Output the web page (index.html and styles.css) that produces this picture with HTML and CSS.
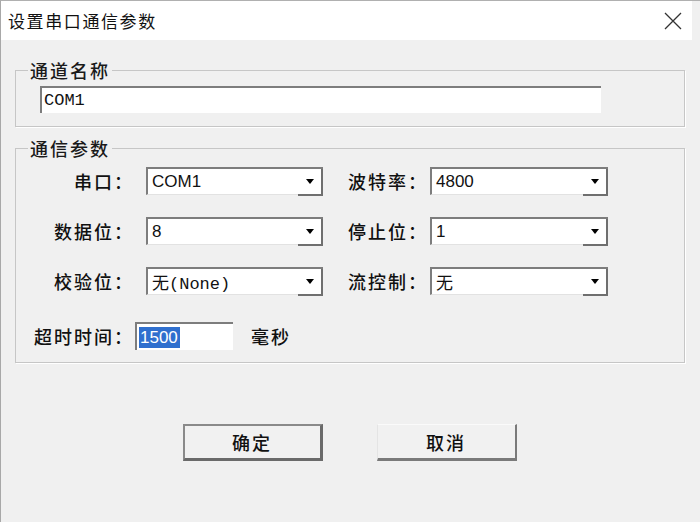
FILE: index.html
```html
<!DOCTYPE html>
<html lang="zh-CN">
<head>
    <meta charset="UTF-8">
    <title>设置串口通信参数</title>
    <link rel="stylesheet" href="styles.css">
</head>
<body>
<div class="window">
    <div class="titlebar">
        <span class="title">设置串口通信参数</span>
        <span class="close">
            <svg width="18" height="18" viewBox="0 0 18 18"><path d="M1 1L17 17M17 1L1 17" stroke="#333" stroke-width="1.3" fill="none"/></svg>
        </span>
    </div>

    <fieldset class="group">
        <legend>通道名称</legend>
        <div class="name-row">
            <div class="edit name-edit"><span class="mono">COM1</span></div>
        </div>
    </fieldset>

    <fieldset class="group">
        <legend>通信参数</legend>
        <div class="params">
            <label>串口：</label>
            <div class="combo"><span class="val mono">COM1</span><span class="arrow"></span></div>
            <label class="right">波特率：</label>
            <div class="combo wide"><span class="val">4800</span><span class="arrow"></span></div>

            <label>数据位：</label>
            <div class="combo"><span class="val">8</span><span class="arrow"></span></div>
            <label class="right">停止位：</label>
            <div class="combo wide"><span class="val mono">1</span><span class="arrow"></span></div>

            <label>校验位：</label>
            <div class="combo"><span class="val">无<span class="mono">(None)</span></span><span class="arrow"></span></div>
            <label class="right">流控制：</label>
            <div class="combo wide"><span class="val">无</span><span class="arrow"></span></div>
        </div>
        <div class="timeout">
            <label>超时时间：</label>
            <div class="edit time-edit"><span class="sel">1500</span></div>
            <span class="unit">毫秒</span>
        </div>
    </fieldset>

    <div class="buttons">
        <button class="btn default">确定</button>
        <button class="btn">取消</button>
    </div>
</div>
</body>
</html>
```

FILE: styles.css
```css
body {
    margin: 0;
    background: #f0f0f0;
    font-family: "Noto Sans CJK SC", "Liberation Sans", sans-serif;
    color: #111;
}
.window {
    height: 522px;
    border-left: 1px solid #a8a8a8;
    border-top: 1px solid #b0b0b0;
    box-sizing: border-box;
    overflow: hidden;
}
.titlebar {
    height: 39px;
    background: #fff;
    display: flex;
    align-items: center;
    justify-content: space-between;
    padding: 0 10px 0 7px;
    margin-right: 8px;
}
.title {
    font-size: 17px;
    letter-spacing: 1.6px;
    color: #111;
}
.close {
    display: flex;
}
.group {
    margin: 19px 15px 0 14px;
    padding: 0;
    border: 1px solid #c6c6c6;
    box-shadow: 1px 1px 0 #fff;
}
.group + .group {
    margin-top: 10px;
}
legend {
    margin-left: 12px;
    padding: 0 2px;
    font-size: 18px;
    font-weight: 500;
    line-height: 22px;
    letter-spacing: 2px;
    color: #1a1a1a;
}
.name-row {
    padding: 5px 0 13px 24px;
}
.edit {
    box-sizing: border-box;
    height: 27px;
    background: #fff;
    border-top: 2px solid #7d7d7d;
    border-left: 2px solid #7d7d7d;
    display: flex;
    align-items: center;
}
.name-edit {
    width: 561px;
    padding-left: 2px;
    font-size: 17px;
}
.mono {
    font-family: "Liberation Mono", monospace;
}
.params {
    display: grid;
    grid-template-columns: 130px 177px 107px 178px;
    row-gap: 22px;
    padding-top: 8px;
}
.params label {
    font-size: 18px;
    font-weight: 500;
    letter-spacing: 2px;
    text-align: right;
    padding-right: 12px;
    line-height: 28px;
}
.params label.right {
    padding-right: 2px;
}
.combo {
    box-sizing: border-box;
    height: 28px;
    background: #fff;
    border-top: 2px solid #7d7d7d;
    border-left: 2px solid #7d7d7d;
    border-bottom: 1px solid #e2e2e2;
    display: flex;
    align-items: center;
}
.val {
    flex: 1;
    padding-left: 4px;
    font-size: 17px;
    font-family: "Liberation Sans", "Noto Sans CJK SC", sans-serif;
}
.arrow {
    box-sizing: border-box;
    width: 25px;
    height: 27px;
    margin-bottom: -1px;
    border-right: 2px solid #6f6f6f;
    border-bottom: 2px solid #6f6f6f;
    display: flex;
    align-items: center;
    justify-content: center;
}
.arrow::after {
    content: "";
    border-left: 4px solid transparent;
    border-right: 4px solid transparent;
    border-top: 5px solid #000;
}
.timeout {
    display: flex;
    align-items: center;
    padding: 27px 0 12px 18px;
}
.timeout label {
    font-size: 18px;
    font-weight: 500;
    letter-spacing: 2px;
}
.time-edit {
    width: 98px;
    height: 28px;
    margin-left: 1px;
    padding-left: 2px;
}
.sel {
    background: #2f6fce;
    color: #fff;
    font-family: "Liberation Sans", sans-serif;
    font-size: 17px;
    line-height: 21px;
    padding: 0 2px 0 1px;
}
.unit {
    margin-left: 18px;
    font-size: 18px;
    font-weight: 500;
    letter-spacing: 2px;
}
.buttons {
    display: flex;
    justify-content: center;
    gap: 54px;
    margin-top: 61px;
    padding-right: 2px;
}
.btn {
    box-sizing: border-box;
    width: 140px;
    height: 37px;
    background: #f1f1f1;
    font-family: "Noto Sans CJK SC", sans-serif;
    font-size: 18px;
    font-weight: 500;
    letter-spacing: 2px;
    color: #111;
    border-top: 1px solid #fafafa;
    border-left: 1px solid #e4e4e4;
    border-right: 2px solid #7a7a7a;
    border-bottom: 3px solid #7a7a7a;
    padding: 0;
}
.btn.default {
    border-top: 2px solid #8a8a8a;
    border-left: 2px solid #8a8a8a;
    border-right: 3px solid #6a6a6a;
    border-bottom: 3px solid #6a6a6a;
}
```
